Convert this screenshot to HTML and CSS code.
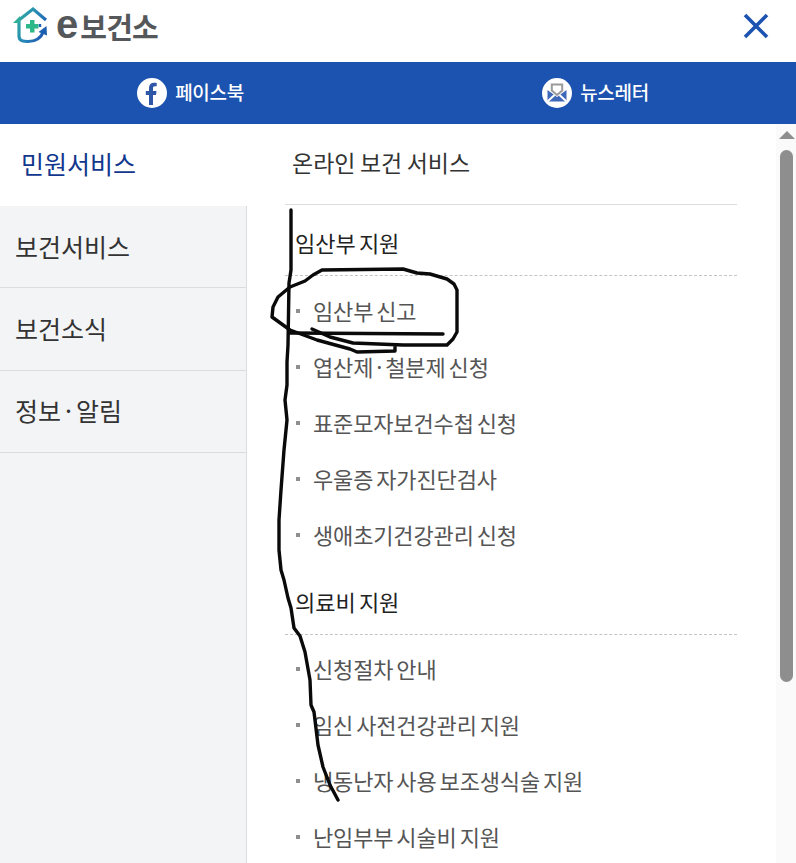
FILE: index.html
```html
<!DOCTYPE html>
<html lang="ko">
<head>
<meta charset="utf-8">
<title>e보건소</title>
<link rel="stylesheet" href="styles.css">
</head>
<body>
<div class="page">
  <header class="top">
    <a class="logo">
      <svg class="logo-icon" width="36" height="40" viewBox="12 6 36 40" fill="none">
        <defs>
          <linearGradient id="lg" gradientUnits="userSpaceOnUse" x1="14" y1="20" x2="46" y2="36">
            <stop offset="0" stop-color="#2fae9c"/><stop offset="0.5" stop-color="#2787b8"/><stop offset="1" stop-color="#1c52b0"/>
          </linearGradient>
        </defs>
        <path d="M19 21 V36 C19 41 23 41.500 28 41.500 C35 41.500 41 38 43.500 31.500" stroke="url(#lg)" stroke-width="3.200"/>
        <path d="M19 20 L33 9 L46 20" stroke="url(#lg)" stroke-width="3.200"/>
        <path d="M13 23 L20 16 V23 Z" fill="#2fae9c"/>
        <path d="M40 24 V27" stroke="#1c62b0" stroke-width="2.400"/>
        <path d="M38.500 32 L46.500 26 L47 35.500 Z" fill="#1c5fb0"/>
        <path d="M30 20 H34.500 V24 H38.500 V28.500 H34.500 V32.500 H30 V28.500 H26 V24 H30 Z" fill="#2cb888"/>
      </svg>
      <span class="logo-e">e</span><span class="logo-name">보건소</span>
    </a>
    <button class="close" aria-label="닫기">
      <svg width="26" height="26" viewBox="0 0 26 26"><path d="M2 2 L24 24 M24 2 L2 24" stroke="#1c52b0" stroke-width="3.600"/></svg>
    </button>
  </header>

  <nav class="social">
    <a class="social-link social-link-fb">
      <svg width="30" height="30" viewBox="0 0 30 30"><circle cx="15" cy="15" r="15" fill="#fff"/><path d="M12 27 V17 H8.800 V13 H12 V9.800 C12 6.500 14 4.700 17 4.700 C18.400 4.700 19.700 4.900 19.700 4.900 V8.300 H18 C16.400 8.300 16 9.200 16 10.300 V13 H19.500 L19 17 H16 V27 Z" fill="#2f57a8"/></svg>
      <span>페이스북</span>
    </a>
    <a class="social-link social-link-news">
      <svg width="30" height="30" viewBox="0 0 30 30"><circle cx="15" cy="15" r="15" fill="#fff"/><path d="M5.500 12 L15 19 L24.500 12 V23.500 H5.500 Z" fill="#3e68b8"/><path d="M5.500 23.500 L12.500 17 M24.500 23.500 L17.500 17" stroke="#fff" stroke-width="2"/><path d="M9.800 6.500 H20.200 V12.500 L15 17 L9.800 12.500 Z" fill="#fff" stroke="#9a9a9a" stroke-width="2"/></svg>
      <span>뉴스레터</span>
    </a>
  </nav>

  <div class="body">
    <aside class="side">
      <a class="side-item is-active"><span>민원서비스</span></a>
      <a class="side-item"><span>보건서비스</span></a>
      <a class="side-item"><span>보건소식</span></a>
      <a class="side-item"><span>정보 · 알림</span></a>
    </aside>
    <main class="content">
      <h1 class="title"><span>온라인 보건 서비스</span></h1>
      <section class="group">
        <h2 class="group-title">임산부 지원</h2>
        <ul class="list">
          <li>임산부 신고</li>
          <li>엽산제 · 철분제 신청</li>
          <li>표준모자보건수첩 신청</li>
          <li>우울증 자가진단검사</li>
          <li>생애초기건강관리 신청</li>
        </ul>
      </section>
      <section class="group">
        <h2 class="group-title">의료비 지원</h2>
        <ul class="list">
          <li>신청절차 안내</li>
          <li>임신 사전건강관리 지원</li>
          <li>냉동난자 사용 보조생식술 지원</li>
          <li>난임부부 시술비 지원</li>
        </ul>
      </section>
    </main>
    <div class="scrollbar">
      <div class="scroll-up"></div>
      <div class="scroll-thumb"></div>
    </div>
  </div>

  <svg class="scribble" width="796" height="863" viewBox="0 0 796 863" fill="none">
    <path d="M291 210 L291 270 L289 283 L288 345 L287 362 L287 385 L285 400 L287 420 L284 450 L281 490 L279 520 L279 550 L281 570 L284 580 L288 598 L291 608 L294 628 L300 636 L305 652 L310 680 L311 705 L314 712 L318 745 L323 767 L330 785 L338 800"/>
    <path d="M395 347 L395 351 L357 352 L350 349 L317 340 L290 330 L272 317 L273 307 L278 297 L290 287 L305 281 L313 275 L322 270 L403 269 L417 273 L430 274 L447 279 L454 284 L457 290 L457 332 L453 339 L447 345 L403 345 L353 343 L330 337 L312 329"/>
    <path d="M290 333 L443 334"/>
  </svg>
</div>
</body>
</html>
```

FILE: styles.css
```css
* { box-sizing: border-box; }
html, body { margin: 0; padding: 0; height: 100%; overflow: hidden; background: #fff; }
body { font-family: "Noto Sans CJK KR", "Noto Sans", sans-serif; color: #333; }
ul { list-style: none; margin: 0; padding: 0; }
h1, h2 { margin: 0; font-weight: 400; }

.page { position: relative; width: 796px; height: 863px; display: flex; flex-direction: column; overflow: hidden; }

.top { height: 62px; flex: none; display: flex; align-items: center; justify-content: space-between; padding: 0 27px 0 12px; }
.logo { display: flex; align-items: center; color: #55585a; }
.logo-icon { flex: none; margin-top: -11px; }
.logo-e { font-family: "Liberation Sans", sans-serif; font-weight: 700; font-size: 40px; line-height: 40px; margin: -15px 0 0 8px; }
.logo-name { font-weight: 700; font-size: 29px; line-height: 40px; letter-spacing: -0.8px; margin: -11px 0 0 2px; }
.close { border: 0; background: none; padding: 0; width: 26px; height: 26px; margin-top: -10px; }
.close svg { display: block; }

.social { height: 62px; flex: none; display: flex; background: #1c52b0; }
.social-link { flex: 1; display: flex; align-items: center; justify-content: center; gap: 8px; color: #fff; font-size: 19px; font-weight: 500; line-height: 26px; letter-spacing: -0.3px; }
.social-link-fb { padding-right: 24px; }
.social-link-news { padding-right: 10px; }
.social-link span { margin-top: -2px; }

.body { flex: 1; min-height: 0; display: flex; }

.side { width: 247px; flex: none; background: #f3f4f6; border-right: 1px solid #dcdcdc; }
.side-item { display: flex; align-items: center; height: 82.300px; padding-left: 15px; font-size: 25px; word-spacing: -3px; color: #333; border-bottom: 1px solid #dcdcdc; }
.side-item span { margin-top: -2px; }
.side-item.is-active { background: #fff; margin-right: -1px; padding-left: 21px; color: #12378e; border-bottom: 0; height: 82px; }
.side-item.is-active span { margin-top: -5px; }

.content { flex: 1; min-width: 0; padding: 0 39px 0 38px; overflow: hidden; }
.title { height: 81px; display: flex; align-items: center; padding: 0 0 0 7px; font-size: 23px; word-spacing: -2px; color: #333; border-bottom: 1px solid #dcdcdc; }
.title span { margin-top: -4px; }
.group-title { display: flex; align-items: flex-end; height: 71px; padding: 0 0 17px 10px; font-size: 22px; word-spacing: -3px; color: #222; border-bottom: 1px dashed #c4c4c4; }
.list { padding: 8px 0 0 11px; }
.group + .group .list { padding-top: 7px; }
.list li { display: flex; align-items: center; height: 56px; font-size: 22px; letter-spacing: -0.15px; word-spacing: -3px; line-height: 30px; color: #555; padding-bottom: 4px; }
.list li::before { content: ""; width: 4px; height: 4px; margin: 2px 13px 0 0; flex: none; background: #8f8f8f; }

.scrollbar { width: 20px; flex: none; background: #fafafa; padding: 7px 3px 0 4px; }
.scroll-up { width: 0; height: 0; margin: 0 0 11px -1px; border-left: 8px solid transparent; border-right: 8px solid transparent; border-bottom: 8px solid #8e8e8e; }
.scroll-thumb { width: 13px; height: 532px; border-radius: 7px; background: #8e8e8e; }

.scribble { position: absolute; left: 0; top: 0; pointer-events: none; }
.scribble path { stroke: #0a0a0a; stroke-width: 3.400; stroke-linejoin: round; stroke-linecap: round; }
```
